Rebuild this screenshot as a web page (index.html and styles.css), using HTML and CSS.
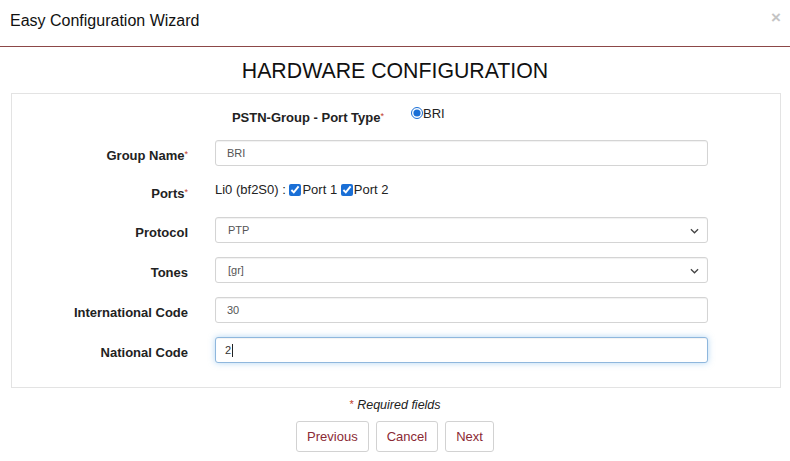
FILE: index.html
```html
<!DOCTYPE html>
<html>
<head>
<meta charset="utf-8">
<link rel="stylesheet" href="styles.css">
</head>
<body>
<div class="modal">
  <div class="modal-header">
    <h1 class="modal-title">Easy Configuration Wizard</h1>
    <span class="close">×</span>
  </div>
  <h2 class="section-title">HARDWARE CONFIGURATION</h2>
  <div class="panel">
    <div class="row row-type">
      <div class="type-label">PSTN-Group - Port Type<span class="req">*</span></div>
      <label class="radio"><input type="radio" checked>BRI</label>
    </div>
    <div class="row">
      <div class="label">Group Name<span class="req">*</span></div>
      <input class="control" type="text" value="BRI">
    </div>
    <div class="row row-ports">
      <div class="label">Ports<span class="req">*</span></div>
      <div class="ports">Li0 (bf2S0) : <label class="check"><input type="checkbox" checked>Port 1</label> <label class="check"><input type="checkbox" checked>Port 2</label></div>
    </div>
    <div class="row">
      <div class="label">Protocol</div>
      <div class="control select">PTP<svg class="chev" viewBox="0 0 10 6" width="9" height="6"><path d="M1 1l4 4 4-4" fill="none" stroke="#444" stroke-width="1.4"/></svg></div>
    </div>
    <div class="row">
      <div class="label">Tones</div>
      <div class="control select">[gr]<svg class="chev" viewBox="0 0 10 6" width="9" height="6"><path d="M1 1l4 4 4-4" fill="none" stroke="#444" stroke-width="1.4"/></svg></div>
    </div>
    <div class="row">
      <div class="label">International Code</div>
      <input class="control" type="text" value="30">
    </div>
    <div class="row last">
      <div class="label">National Code</div>
      <div class="control focus">2<span class="caret"></span></div>
    </div>
  </div>
  <p class="required"><span class="req">*</span> Required fields</p>
  <div class="buttons">
    <button class="btn">Previous</button>
    <button class="btn">Cancel</button>
    <button class="btn">Next</button>
  </div>
</div>
</body>
</html>
```

FILE: styles.css
```css
* { box-sizing: border-box; }
body {
  margin: 0;
  background: #fff;
  font-family: "Liberation Sans", Arial, sans-serif;
  color: #222;
}
.modal { width: 790px; }
.modal-header {
  height: 47px;
  border-bottom: 1px solid #8c4848;
  display: flex;
  align-items: center;
  justify-content: space-between;
  padding: 0 10px 5px 10px;
}
.modal-title {
  margin: 0;
  font-size: 16px;
  font-weight: normal;
  color: #111;
}
.close {
  font-size: 17px;
  font-weight: bold;
  color: #c4c4c4;
  margin-top: -6px;
  margin-right: -1px;
}
.section-title {
  margin: 13px 0 10px;
  text-align: center;
  font-size: 21.3px;
  font-weight: normal;
  color: #111;
  line-height: 23px;
}
.panel {
  margin: 0 9px 0 11px;
  border: 1px solid #e3e3e3;
  padding: 10px 0 24px;
}
.row {
  display: flex;
  align-items: center;
  height: 26px;
  margin-bottom: 14px;
}
.row.last { margin-bottom: 0; }
.row-type {
  height: 24px;
  margin-bottom: 12px;
}
.row-ports {
  height: 24px;
  margin-bottom: 13px;
}
.label {
  width: 176px;
  text-align: right;
  font-size: 13px;
  font-weight: bold;
  color: #222;
  padding-top: 5px;
  margin-right: 27px;
}
.row-ports .label { padding-top: 3px; }
.type-label {
  width: 372px;
  text-align: right;
  font-size: 13px;
  font-weight: bold;
  color: #222;
  padding-top: 3px;
  margin-right: 27px;
}
.req { color: #c0392b; font-size: 9px; vertical-align: top; font-weight: normal; }
.label .req, .type-label .req { vertical-align: 3px; }
.radio {
  display: flex;
  align-items: center;
  font-size: 13px;
  color: #222;
  margin-top: -6px;
}
.radio input {
  margin: 0;
  width: 12px;
  height: 12px;
  accent-color: #1a6fd6;
}
.ports {
  font-size: 13px;
  color: #222;
  white-space: pre;
  margin-top: -6px;
}
.check { display: inline; }
.check input {
  margin: 0 1px 0 0;
  width: 12px;
  height: 12px;
  vertical-align: -2px;
  accent-color: #1a6fd6;
}
.control {
  width: 493px;
  height: 26px;
  border: 1px solid #d4d4d4;
  border-radius: 3px;
  box-shadow: inset 0 1px 1px rgba(0,0,0,0.06);
  padding: 0 10px 0 11px;
  font-family: "Liberation Sans", Arial, sans-serif;
  font-size: 11px;
  color: #555;
  background: #fff;
  display: flex;
  align-items: center;
  outline: none;
}
input.control { display: block; }
.select { justify-content: space-between; padding-right: 8px; padding-left: 12px; }
.chev { margin-top: 1px; }
.focus {
  border-color: #8fb7dd;
  box-shadow: inset 0 1px 1px rgba(0,0,0,0.05), 0 0 6px rgba(102,175,233,0.5);
  color: #333;
  padding-left: 9px;
}
.caret {
  display: inline-block;
  width: 1px;
  height: 13px;
  background: #222;
  margin-left: 1px;
}
.required {
  margin: 9px 0 0;
  text-align: center;
  font-size: 12.5px;
  font-style: italic;
  color: #222;
  line-height: 14px;
}
.required .req { font-style: normal; font-size: 11px; vertical-align: 1px; }
.buttons {
  display: flex;
  justify-content: center;
  gap: 7px;
  margin-top: 9px;
  padding-left: 0;
}
.btn {
  height: 31px;
  padding: 0 10px;
  background: #fff;
  border: 1px solid #d2d2d2;
  border-radius: 3px;
  font-family: "Liberation Sans", Arial, sans-serif;
  font-size: 13px;
  color: #8b2a35;
}
```
